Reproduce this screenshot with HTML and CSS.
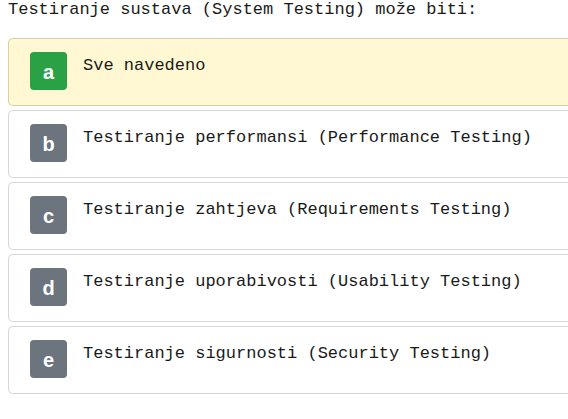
FILE: index.html
```html
<!DOCTYPE html>
<html>
<head>
<meta charset="utf-8">
<link rel="stylesheet" href="styles.css">
</head>
<body>
<div class="page">
  <div class="question">Testiranje sustava (System Testing) može biti:</div>
  <div class="options">
    <div class="option correct"><span class="badge green">a</span><span class="label">Sve navedeno</span></div>
    <div class="option"><span class="badge">b</span><span class="label">Testiranje performansi (Performance Testing)</span></div>
    <div class="option"><span class="badge">c</span><span class="label">Testiranje zahtjeva (Requirements Testing)</span></div>
    <div class="option"><span class="badge">d</span><span class="label">Testiranje uporabivosti (Usability Testing)</span></div>
    <div class="option"><span class="badge">e</span><span class="label">Testiranje sigurnosti (Security Testing)</span></div>
  </div>
</div>
</body>
</html>
```

FILE: styles.css
```css
html, body {
  margin: 0;
  padding: 0;
  background: #ffffff;
}
.page {
  padding: 0 0 0 8px;
  font-family: "Liberation Mono", "Courier New", monospace;
  font-size: 17px;
  color: #1a1a1a;
}
.question {
  line-height: 20px;
  height: 20px;
  margin-bottom: 18px;
}
.options {
  display: flex;
  flex-direction: column;
  gap: 4px;
}
.option {
  height: 68px;
  box-sizing: border-box;
  border: 1px solid #d6d6d6;
  border-right: none;
  border-radius: 5px 0 0 5px;
  background: #ffffff;
  display: flex;
  align-items: flex-start;
  padding: 13px 0 0 21px;
}
.option.correct {
  background: #fff8d2;
  border-color: #d9cfa4;
}
.badge {
  width: 37px;
  height: 38px;
  border-radius: 4px;
  background: #6c747e;
  color: #ffffff;
  font-family: "Liberation Sans", Arial, sans-serif;
  font-weight: bold;
  font-size: 20px;
  display: flex;
  align-items: center;
  justify-content: center;
  flex-shrink: 0;
  padding-top: 2px;
  box-sizing: border-box;
}
.badge.green {
  background: #2ba145;
}
.label {
  margin-left: 16px;
  line-height: 24px;
  margin-top: 2px;
}
```
